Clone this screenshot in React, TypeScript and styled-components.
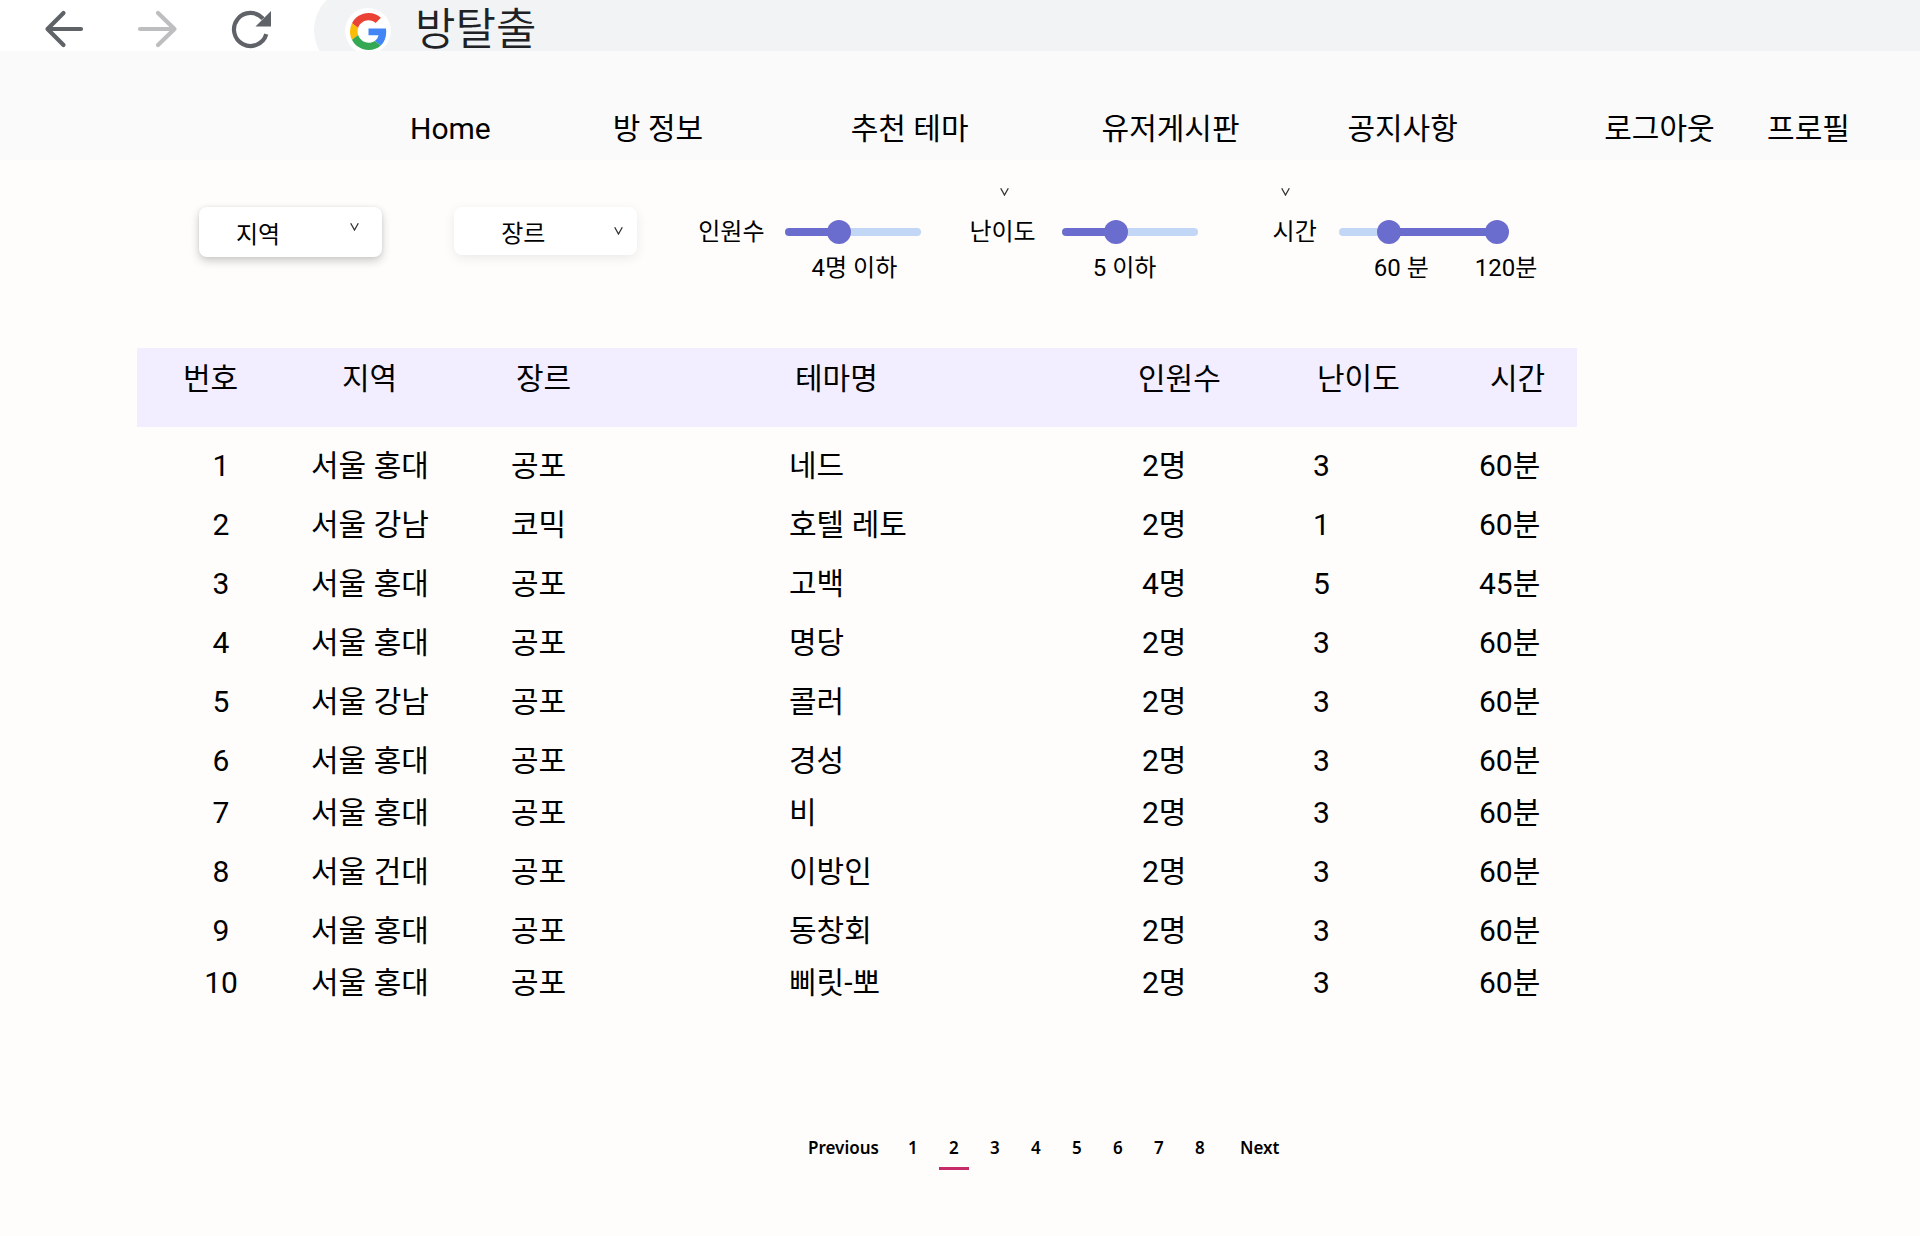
import React, { useState } from "react";
import styled, { createGlobalStyle } from "styled-components";

const GlobalStyle = createGlobalStyle`
  *, *::before, *::after { box-sizing: border-box; }
  body {
    margin: 0;
    background: #fffdfc;
    color: #000;
    font-family: Roboto, "Noto Sans CJK KR", sans-serif;
  }
  button, input, select { font: inherit; color: inherit; }
`;

const Page = styled.div`
  min-height: 100vh;
`;

/* ---------- browser bar ---------- */

const BrowserBar = styled.div`
  display: flex;
  align-items: flex-start;
  height: 51px;
  overflow: hidden;
  background: #fff;
`;

const BrowserActions = styled.div`
  display: flex;
  gap: 46px;
  padding: 5px 38px 0 40px;
`;

const IconButton = styled.button`
  width: 48px;
  height: 48px;
  padding: 0;
  border: 0;
  background: none;
  svg { display: block; }
`;

const AddressBar = styled.label`
  display: flex;
  flex: 1;
  align-items: center;
  gap: 24px;
  height: 84px;
  margin-top: -12px;
  padding: 2px 0 0 31px;
  border-radius: 42px 0 0 42px;
  background: #f1f3f4;
`;

const LogoDisc = styled.span`
  display: grid;
  flex: none;
  place-items: center;
  width: 46px;
  height: 46px;
  border-radius: 50%;
  background: #fff;
`;

const AddressInput = styled.input`
  flex: 1;
  min-width: 0;
  height: 74px;
  padding: 0 0 10px;
  border: 0;
  outline: 0;
  background: none;
  color: #202124;
  font-family: "Noto Sans CJK KR", sans-serif;
  font-size: 44px;
  font-weight: 350;
`;

/* ---------- site navigation ---------- */

const SiteNav = styled.nav`
  display: grid;
  grid-template-columns: 203fr 238fr 251fr 246fr 257fr 163fr 153fr;
  align-items: end;
  height: 109px;
  padding: 0 0 11px 410px;
  background: #fafafb;
`;

const NavLink = styled.a`
  color: inherit;
  font-size: 30px;
  line-height: 40px;
  text-decoration: none;
  white-space: nowrap;
`;

/* ---------- filters ---------- */

const Filters = styled.form`
  display: grid;
  grid-template-columns: 255fr 244fr 271fr 303fr 647fr;
  align-items: start;
  padding: 24px 0 64px 199px;
  font-size: 24px;
  line-height: 32px;
`;

const SelectBox = styled.label<{ $raised?: boolean }>`
  display: grid;
  width: 183px;
  height: ${(p) => (p.$raised ? 50 : 48)}px;
  margin-top: 23px;
  border-radius: 8px;
  background: #fff;
  box-shadow: ${(p) =>
    p.$raised
      ? "0 4px 10px rgba(0, 0, 0, 0.2), 0 0 4px rgba(0, 0, 0, 0.06)"
      : "0 3px 12px rgba(0, 0, 0, 0.08)"};
`;

const Select = styled.select<{ $indent: number }>`
  grid-area: 1 / 1;
  appearance: none;
  width: 100%;
  padding: 5px 0 0 ${(p) => p.$indent}px;
  border: 0;
  border-radius: 8px;
  outline: 0;
  background: transparent;
`;

const SelectArrow = styled.span<{ $top: number; $right: number }>`
  grid-area: 1 / 1;
  justify-self: end;
  padding: ${(p) => p.$top}px ${(p) => p.$right}px 0 0;
  line-height: 0;
  pointer-events: none;
`;

const RangeField = styled.fieldset<{ $gap: number }>`
  display: grid;
  grid-template-columns: max-content max-content;
  grid-template-rows: 32px 32px 36px;
  column-gap: ${(p) => p.$gap}px;
  margin: 0;
  padding: 0;
  border: 0;
  white-space: nowrap;
`;

const ArrowSlot = styled.span<{ $indent: number }>`
  grid-area: 1 / 1;
  padding: 4px 0 0 ${(p) => p.$indent}px;
  line-height: 0;
`;

const RangeLabel = styled.label`
  grid-area: 2 / 1;
`;

const RangeTrack = styled.div<{ $width: number }>`
  grid-area: 2 / 2;
  display: grid;
  align-items: center;
  width: ${(p) => p.$width}px;
`;

const RangeLine = styled.span`
  grid-area: 1 / 1;
  height: 8px;
  border-radius: 4px;
`;

const RangeInput = styled.input`
  grid-area: 1 / 1;
  appearance: none;
  width: 100%;
  height: 24px;
  margin: 0;
  background: none;
  pointer-events: none;
  &::-webkit-slider-thumb {
    appearance: none;
    width: 24px;
    height: 24px;
    border-radius: 50%;
    background: #6a6dcd;
    pointer-events: auto;
  }
  &::-moz-range-thumb {
    width: 24px;
    height: 24px;
    border: 0;
    border-radius: 50%;
    background: #6a6dcd;
    pointer-events: auto;
  }
`;

const RangeValues = styled.div<{ $indent: number }>`
  grid-area: 3 / 2;
  display: flex;
  gap: 46px;
  width: 0;
  padding: 4px 0 0 ${(p) => p.$indent}px;
`;

/* ---------- theme table ---------- */

const ThemeTable = styled.table`
  width: 75%;
  margin-left: 137px;
  border-collapse: collapse;
  table-layout: fixed;
  font-size: 30px;
  line-height: 40px;
`;

const HeadRow = styled.tr`
  height: 79px;
  background: #f2edff;
`;

const HeadCell = styled.th<{ $width: number; $indent: number }>`
  width: ${(p) => p.$width}px;
  padding: 11px 0 0 ${(p) => p.$indent}px;
  font-weight: 400;
  text-align: left;
  vertical-align: top;
  white-space: nowrap;
`;

const BodyRow = styled.tr<{ $compact?: boolean }>`
  height: ${(p) => (p.$compact ? 52 : 59)}px;
`;

const BodyCell = styled.td<{ $indent: number }>`
  padding: 0 0 0 ${(p) => p.$indent}px;
  vertical-align: bottom;
  white-space: nowrap;
  &:first-child {
    padding-right: 4px;
    text-align: center;
  }
`;

/* ---------- pagination ---------- */

const Pagination = styled.nav`
  display: flex;
  align-items: flex-start;
  gap: 11px;
  margin: 133px 0 0 808px;
  font-family: "Noto Sans", sans-serif;
  font-size: 17px;
  font-weight: 600;
  line-height: 24px;
`;

const PageStep = styled.button`
  padding: 0 8px 0 0;
  border: 0;
  background: none;
  button + &:last-child { padding: 0 0 0 14px; }
`;

const PageNumber = styled.button<{ $current?: boolean }>`
  width: 30px;
  height: 34px;
  padding: 0 0 7px;
  border: 0;
  border-bottom: 3px solid ${(p) => (p.$current ? "#c52b68" : "transparent")};
  background: none;
`;

/* ---------- drawings ---------- */

const ArrowIcon = ({ color, flip }: { color: string; flip?: boolean }) => (
  <svg width="48" height="48" viewBox="0 0 48 48" fill="none" stroke={color} strokeWidth="4.200" strokeLinecap="round" strokeLinejoin="round">
    <path d={flip ? "M6 24H40.500M24 8L40.500 24L24 40" : "M41 24H7.500M23.500 8L7.500 24L23.500 40"} />
  </svg>
);

const ReloadIcon = () => (
  <svg width="48" height="48" viewBox="0 0 48 48">
    <path d="M35 13.700A16.500 16.500 0 1 0 38.300 29.200" fill="none" stroke="#5f6368" strokeWidth="4.200" />
    <path d="M43 6V21.500H27.500Z" fill="#5f6368" />
  </svg>
);

const GoogleIcon = () => (
  <svg width="37" height="37" viewBox="0 0 48 48">
    <path fill="#ea4335" d="M24 9.500c3.540 0 6.710 1.220 9.210 3.600l6.850-6.850C35.900 2.380 30.470 0 24 0 14.620 0 6.510 5.380 2.560 13.220l7.980 6.190C12.430 13.720 17.740 9.500 24 9.500z" />
    <path fill="#4285f4" d="M46.980 24.550c0-1.570-.150-3.090-.380-4.550H24v9.020h12.940c-.580 2.960-2.260 5.480-4.780 7.180l7.730 6c4.510-4.180 7.090-10.360 7.090-17.650z" />
    <path fill="#fbbc05" d="M10.530 28.590A14.500 14.500 0 0 1 9.770 24c0-1.600.270-3.140.760-4.590l-7.980-6.190A23.900 23.900 0 0 0 0 24c0 3.880.920 7.540 2.560 10.780l7.970-6.190z" />
    <path fill="#34a853" d="M24 48c6.480 0 11.930-2.130 15.890-5.810l-7.730-6c-2.150 1.450-4.920 2.300-8.160 2.300-6.260 0-11.570-4.220-13.470-9.910l-7.980 6.190C6.510 42.620 14.620 48 24 48z" />
  </svg>
);

const Caret = () => (
  <svg width="9" height="8" viewBox="0 0 9 8" fill="none" stroke="#333" strokeWidth="1.300">
    <path d="M0.700 0.300L4.500 7L8.300 0.300" />
  </svg>
);

/* ---------- data ---------- */

const NAV_ITEMS = ["Home", "방 정보", "추천 테마", "유저게시판", "공지사항", "로그아웃", "프로필"];

const COLUMNS = [
  { title: "번호", width: 170, head: 46, body: 2 },
  { title: "지역", width: 200, head: 35, body: 4 },
  { title: "장르", width: 280, head: 9, body: 4 },
  { title: "테마명", width: 350, head: 8, body: 2 },
  { title: "인원수", width: 170, head: 1, body: 5 },
  { title: "난이도", width: 170, head: 10, body: 6 },
  { title: "시간", width: 100, head: 13, body: 2 },
];

const THEMES = [
  ["1", "서울 홍대", "공포", "네드", "2명", "3", "60분"],
  ["2", "서울 강남", "코믹", "호텔 레토", "2명", "1", "60분"],
  ["3", "서울 홍대", "공포", "고백", "4명", "5", "45분"],
  ["4", "서울 홍대", "공포", "명당", "2명", "3", "60분"],
  ["5", "서울 강남", "공포", "콜러", "2명", "3", "60분"],
  ["6", "서울 홍대", "공포", "경성", "2명", "3", "60분"],
  ["7", "서울 홍대", "공포", "비", "2명", "3", "60분"],
  ["8", "서울 건대", "공포", "이방인", "2명", "3", "60분"],
  ["9", "서울 홍대", "공포", "동창회", "2명", "3", "60분"],
  ["10", "서울 홍대", "공포", "삐릿-뽀", "2명", "3", "60분"],
];

const COMPACT_ROWS = ["7", "10"];
const PAGES = [1, 2, 3, 4, 5, 6, 7, 8];

const FILL = "#6a6dcd";
const REST = "#c2d6f5";

/* Colours the line between two values, following the centre of the 24px thumb. */
function lineStyle(width: number, min: number, max: number, from: number | null, to: number) {
  const at = (v: number) => 12 + ((v - min) / (max - min)) * (width - 24);
  const start = from === null ? 0 : at(from);
  const end = at(to);
  return {
    background: `linear-gradient(to right, ${REST} ${start}px, ${FILL} ${start}px, ${FILL} ${end}px, ${REST} ${end}px)`,
    marginRight: end >= width - 12 ? 12 : 0,
  };
}

export default function App() {
  const [people, setPeople] = useState(4);
  const [level, setLevel] = useState(5);
  const [from, setFrom] = useState(60);
  const [to, setTo] = useState(120);
  const [page, setPage] = useState(2);

  return (
    <Page>
      <GlobalStyle />
      <BrowserBar>
        <BrowserActions>
          <IconButton type="button" aria-label="뒤로"><ArrowIcon color="#5f6368" /></IconButton>
          <IconButton type="button" aria-label="앞으로"><ArrowIcon color="#bcbec0" flip /></IconButton>
          <IconButton type="button" aria-label="새로고침"><ReloadIcon /></IconButton>
        </BrowserActions>
        <AddressBar>
          <LogoDisc><GoogleIcon /></LogoDisc>
          <AddressInput aria-label="검색" defaultValue="방탈출" />
        </AddressBar>
      </BrowserBar>

      <SiteNav>
        {NAV_ITEMS.map((item) => (
          <NavLink key={item} href="#">{item}</NavLink>
        ))}
      </SiteNav>

      <main>
        <Filters>
          <SelectBox $raised>
            <Select $indent={37} aria-label="지역"><option>지역</option></Select>
            <SelectArrow $top={16} $right={23}><Caret /></SelectArrow>
          </SelectBox>
          <SelectBox>
            <Select $indent={47} aria-label="장르"><option>장르</option></Select>
            <SelectArrow $top={20} $right={14}><Caret /></SelectArrow>
          </SelectBox>

          <RangeField $gap={20}>
            <RangeLabel htmlFor="people">인원수</RangeLabel>
            <RangeTrack $width={136}>
              <RangeLine style={lineStyle(136, 1, 9, null, people)} />
              <RangeInput id="people" type="range" min={1} max={9} value={people} onChange={(e) => setPeople(+e.target.value)} />
            </RangeTrack>
            <RangeValues $indent={27}><output htmlFor="people">{people}명 이하</output></RangeValues>
          </RangeField>

          <RangeField $gap={26}>
            <ArrowSlot $indent={31}><Caret /></ArrowSlot>
            <RangeLabel htmlFor="level">난이도</RangeLabel>
            <RangeTrack $width={136}>
              <RangeLine style={lineStyle(136, 2, 10, null, level)} />
              <RangeInput id="level" type="range" min={2} max={10} value={level} onChange={(e) => setLevel(+e.target.value)} />
            </RangeTrack>
            <RangeValues $indent={31}><output htmlFor="level">{level} 이하</output></RangeValues>
          </RangeField>

          <RangeField $gap={22}>
            <ArrowSlot $indent={8}><Caret /></ArrowSlot>
            <RangeLabel htmlFor="time-from">시간</RangeLabel>
            <RangeTrack $width={170}>
              <RangeLine style={lineStyle(170, 39, 120, from, to)} />
              <RangeInput id="time-from" type="range" min={39} max={120} value={from} onChange={(e) => setFrom(Math.min(+e.target.value, to))} />
              <RangeInput id="time-to" aria-label="최대 시간" type="range" min={39} max={120} value={to} onChange={(e) => setTo(Math.max(+e.target.value, from))} />
            </RangeTrack>
            <RangeValues $indent={35}>
              <output htmlFor="time-from">{from} 분</output>
              <output htmlFor="time-to">{to}분</output>
            </RangeValues>
          </RangeField>
        </Filters>

        <ThemeTable>
          <thead>
            <HeadRow>
              {COLUMNS.map((c) => (
                <HeadCell key={c.title} scope="col" $width={c.width} $indent={c.head}>{c.title}</HeadCell>
              ))}
            </HeadRow>
          </thead>
          <tbody>
            {THEMES.map((row) => (
              <BodyRow key={row[0]} $compact={COMPACT_ROWS.includes(row[0])}>
                {row.map((text, i) => (
                  <BodyCell key={COLUMNS[i].title} $indent={COLUMNS[i].body}>{text}</BodyCell>
                ))}
              </BodyRow>
            ))}
          </tbody>
        </ThemeTable>

        <Pagination aria-label="페이지">
          <PageStep type="button" onClick={() => setPage(Math.max(1, page - 1))}>Previous</PageStep>
          {PAGES.map((n) => (
            <PageNumber key={n} type="button" $current={n === page} onClick={() => setPage(n)}>{n}</PageNumber>
          ))}
          <PageStep type="button" onClick={() => setPage(Math.min(8, page + 1))}>Next</PageStep>
        </Pagination>
      </main>
    </Page>
  );
}
